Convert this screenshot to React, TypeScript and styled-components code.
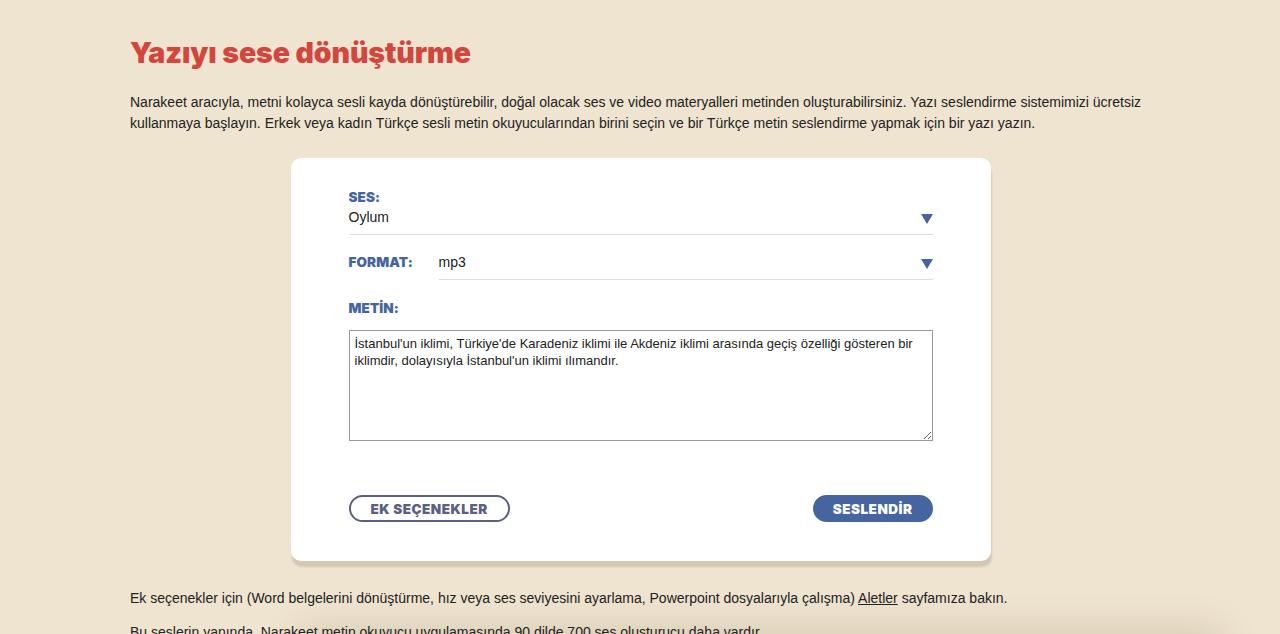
import styled, { createGlobalStyle } from 'styled-components';

const GlobalStyle = createGlobalStyle`
  html, body {
    margin: 0;
    padding: 0;
    background: #efe4cf;
  }
  body {
    font-family: "Liberation Sans", Arial, sans-serif;
    color: #222;
  }
`;

const Caret = () => (
  <svg width="12" height="10" viewBox="0 0 12 10">
    <path d="M0 0 L12 0 L6 10 Z" fill="#4665a0" />
  </svg>
);

const App = () => {
  return (
    <>
      <GlobalStyle />
      <S.Page>
        <S.Title>Yazıyı sese dönüştürme</S.Title>
        <S.Text>
          Narakeet aracıyla, metni kolayca sesli kayda dönüştürebilir, doğal
          olacak ses ve video materyalleri metinden oluşturabilirsiniz. Yazı
          seslendirme sistemimizi ücretsiz kullanmaya başlayın. Erkek veya kadın
          Türkçe sesli metin okuyucularından birini seçin ve bir Türkçe metin
          seslendirme yapmak için bir yazı yazın.
        </S.Text>

        <S.Card>
          <S.Field>
            <S.Label>SES:</S.Label>
            <S.Select>
              <span>Oylum</span>
              <Caret />
            </S.Select>
          </S.Field>

          <S.InlineField>
            <S.Label $inline>FORMAT:</S.Label>
            <S.Select>
              <span>mp3</span>
              <Caret />
            </S.Select>
          </S.InlineField>

          <S.Field>
            <S.Label>METİN:</S.Label>
            <S.TextArea
              defaultValue="İstanbul'un iklimi, Türkiye'de Karadeniz iklimi ile Akdeniz iklimi arasında geçiş özelliği gösteren bir iklimdir, dolayısıyla İstanbul'un iklimi ılımandır."
            />
          </S.Field>

          <S.Actions>
            <S.Button>EK SEÇENEKLER</S.Button>
            <S.Button $primary>SESLENDİR</S.Button>
          </S.Actions>
        </S.Card>

        <S.Text>
          Ek seçenekler için (Word belgelerini dönüştürme, hız veya ses
          seviyesini ayarlama, Powerpoint dosyalarıyla çalışma){' '}
          <a href="#">Aletler</a> sayfamıza bakın.
        </S.Text>
        <S.Text>
          Bu seslerin yanında, Narakeet metin okuyucu uygulamasında 90 dilde 700
          ses oluşturucu daha vardır.
        </S.Text>
      </S.Page>
      <S.BottomShade />
    </>
  );
};

interface LabelProps {
  $inline?: boolean;
}

interface ButtonProps {
  $primary?: boolean;
}

const S = {
  Page: styled.div`
    width: 1020px;
    margin: 0 auto;
    padding: 34px 0 40px;
    display: flex;
    flex-direction: column;
  `,
  Title: styled.h1`
    margin: 0 0 20px;
    font-family: Inter, "Noto Sans", sans-serif;
    font-weight: 900;
    font-size: 28.5px;
    letter-spacing: -0.1px;
    line-height: 38px;
    color: #d2463e;
  `,
  Text: styled.p`
    margin: 0 0 13px;
    font-size: 14px;
    line-height: 21px;
    color: #222;

    & a {
      color: #222;
    }
  `,
  Card: styled.div`
    width: 700px;
    box-sizing: border-box;
    align-self: center;
    margin: 11px 0 27px 1px;
    padding: 30px 58px 39px;
    background: #fff;
    border-radius: 10px;
    box-shadow: 1px 6px 2px rgba(90, 70, 40, 0.18);
    display: flex;
    flex-direction: column;
  `,
  Field: styled.div`
    display: flex;
    flex-direction: column;
    margin-bottom: 16px;
  `,
  InlineField: styled.div`
    display: grid;
    grid-template-columns: 90px 1fr;
    align-items: start;
    margin-bottom: 19px;
  `,
  Label: styled.div<LabelProps>`
    padding-top: ${({ $inline }) => ($inline ? '2px' : '0')};
    font-family: Inter, "Noto Sans", sans-serif;
    font-weight: 900;
    font-size: 13.5px;
    line-height: 18px;
    letter-spacing: 0.1px;
    color: #4665a0;
  `,
  Select: styled.div`
    display: flex;
    align-items: center;
    justify-content: space-between;
    padding: 2px 0 8px;
    line-height: 18px;
    border-bottom: 1px solid #dedede;
    font-size: 14px;
    color: #222;

    & svg {
      margin-top: 4px;
    }
  `,
  TextArea: styled.textarea`
    margin-top: 13px;
    height: 111px;
    box-sizing: border-box;
    padding: 4px 5px;
    border: 1px solid #999;
    font-family: "Liberation Sans", Arial, sans-serif;
    font-size: 13px;
    line-height: 17px;
    color: #222;
    resize: vertical;
  `,
  Actions: styled.div`
    display: flex;
    justify-content: space-between;
    margin-top: 38px;
  `,
  Button: styled.button<ButtonProps>`
    height: 27px;
    padding: 0 ${({ $primary }) => ($primary ? '18px' : '20px')};
    border-radius: 14px;
    border: 2px solid ${({ $primary }) => ($primary ? '#4665a0' : '#5c6080')};
    background: ${({ $primary }) => ($primary ? '#4665a0' : '#fff')};
    color: ${({ $primary }) => ($primary ? '#fff' : '#5c6080')};
    font-family: Inter, "Noto Sans", sans-serif;
    font-weight: 900;
    font-size: 13.5px;
    letter-spacing: 0.5px;
    cursor: pointer;
  `,
  BottomShade: styled.div`
    position: fixed;
    left: 300px;
    right: 60px;
    bottom: -30px;
    height: 30px;
    box-shadow: 0 0 40px rgba(60, 40, 10, 0.18);
    pointer-events: none;
  `,
};

export default App;
